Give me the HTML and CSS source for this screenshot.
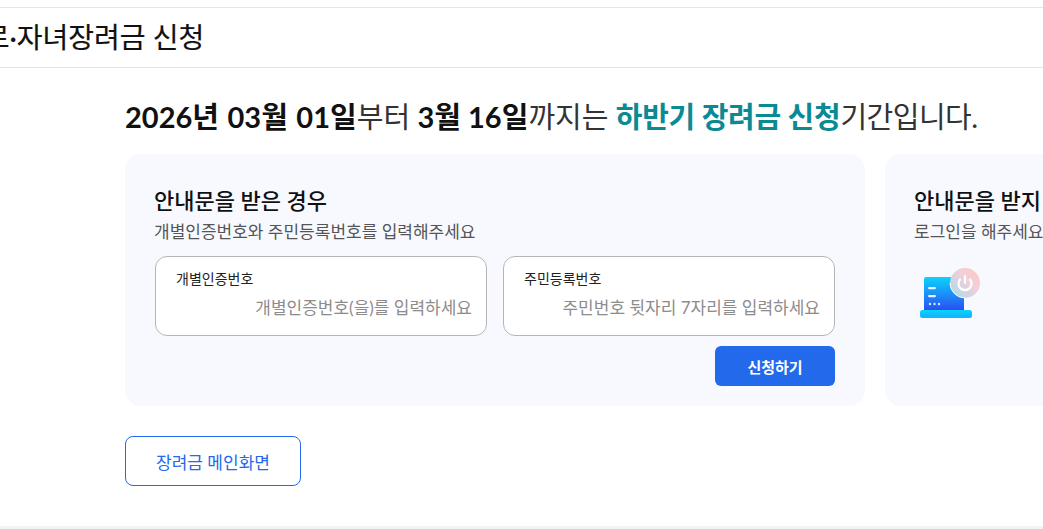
FILE: index.html
```html
<!DOCTYPE html>
<html lang="ko">
	<head>
		<title>근로·자녀장려금 신청</title>
		<meta name="viewport" content="width=device-width, initial-scale=1.0">
		<link rel="stylesheet" href="styles.css">
	</head>
	<body>
		<div class="page">
			<div class="titlebar">
				<h1>근로·자녀장려금 신청</h1>
			</div>
			<div class="content">
				<p class="notice"><b class="date">2026년 03월 01일</b>부터 <b>3월 16일</b>까지는 <b class="teal">하반기 장려금 신청</b><span class="tail">기간입니다.</span></p>
				<div class="cards">
					<div class="card">
						<h2>안내문을 받은 경우</h2>
						<p class="desc">개별인증번호와 주민등록번호를 입력해주세요</p>
						<div class="fields">
							<label class="field">
								<span class="field-name">개별인증번호</span>
								<input type="text" placeholder="개별인증번호(을)를 입력하세요">
							</label>
							<label class="field">
								<span class="field-name">주민등록번호</span>
								<input type="text" placeholder="주민번호 뒷자리 7자리를 입력하세요">
							</label>
						</div>
						<div class="actions">
							<button class="apply">신청하기</button>
						</div>
					</div>
					<div class="card card-side">
						<h2>안내문을 받지 않은 경우</h2>
						<p class="desc">로그인을 해주세요</p>
						<svg class="login-icon" width="62" height="52" viewBox="0 0 62 52">
							<defs>
								<linearGradient id="screen" x1="0" y1="0" x2="0" y2="1">
									<stop offset="0" stop-color="#0bd4fd"/>
									<stop offset="1" stop-color="#2a4ff2"/>
								</linearGradient>
								<linearGradient id="power" x1="0" y1="1" x2="1" y2="0">
									<stop offset="0" stop-color="#9fdcf2"/>
									<stop offset="0.600" stop-color="#f3d0d6"/>
									<stop offset="1" stop-color="#fcc6c6"/>
								</linearGradient>
								<linearGradient id="base" x1="0" y1="0" x2="0" y2="1">
									<stop offset="0" stop-color="#08d4fd"/>
									<stop offset="1" stop-color="#14b0fb"/>
								</linearGradient>
							</defs>
							<path d="M4 11a2 2 0 0 1 2-2h38v33H4z" fill="url(#screen)"/>
							<rect x="0" y="42" width="52" height="8" rx="2.500" fill="url(#base)"/>
							<rect x="8" y="19" width="8" height="2.200" rx="1.100" fill="#e4f6ff"/>
							<rect x="8" y="27" width="8" height="2.200" rx="1.100" fill="#e4f6ff"/>
							<circle cx="10" cy="36" r="1.200" fill="#cfeeff"/>
							<circle cx="14.500" cy="36" r="1.200" fill="#cfeeff"/>
							<circle cx="19" cy="36" r="1.200" fill="#cfeeff"/>
							<circle cx="45" cy="15" r="15" fill="url(#power)"/>
							<path d="M30 15a15 15 0 0 0 15 15" fill="none" stroke="#fff" stroke-width="1"/>
							<path d="M40 11.500a6.500 6.500 0 1 0 10 0" fill="none" stroke="#fff" stroke-width="2.200" stroke-linecap="round"/>
							<path d="M45 8v7" stroke="#fff" stroke-width="2.200" stroke-linecap="round"/>
						</svg>
					</div>
				</div>
				<a class="main-link" href="#">장려금 메인화면</a>
			</div>
		</div>
	</body>
</html>
```

FILE: styles.css
```css
html, body {
	height: 100%;
}
body {
	font-family: Lato, 'Noto Sans CJK KR', sans-serif;
	margin: 0px;
	background-color: #ffffff;
	color: #111111;
	overflow: hidden;
}
.page {
	height: 526px;
	border-bottom: 3px solid #f2f3f7;
	overflow: hidden;
}

.titlebar {
	margin-top: 7px;
	height: 59px;
	border-top: 1px solid #e5e5e5;
	border-bottom: 1px solid #e5e5e5;
	display: flex;
	align-items: center;
}
h1 {
	font-size: 28px;
	font-weight: 400;
	line-height: 59px;
	margin: 0px 0px 0px -42px;
	white-space: nowrap;
	-webkit-text-stroke: 0.2px #111111;
}

.content {
	padding-left: 125px;
}
.notice {
	font-size: 29px;
	line-height: 40px;
	margin: 29px 0px 17px;
	white-space: nowrap;
	color: #333333;
}
.notice b {
	color: #111111;
	font-weight: 700;
}
.notice .date {
	word-spacing: 1.500px;
}
.notice .teal {
	color: #0b8a93;
	letter-spacing: -0.300px;
}
.notice .tail {
	letter-spacing: -0.500px;
}

.cards {
	display: flex;
	gap: 20px;
	width: 1200px;
}
.card {
	width: 740px;
	height: 252px;
	box-sizing: border-box;
	flex-shrink: 0;
	background-color: #f8f9ff;
	border-radius: 16px;
	padding: 30px 30px 30px 29px;
}
.card-side {
	width: 400px;
}
h2 {
	font-size: 22px;
	font-weight: 500;
	line-height: 34px;
	margin: 0px;
	white-space: nowrap;
}
.desc {
	font-size: 17px;
	line-height: 24px;
	margin: 2px 0px 0px;
	color: #555555;
	white-space: nowrap;
}

.fields {
	display: flex;
	gap: 16px;
	margin-top: 12px;
	margin-left: 1px;
}
.field {
	width: 332px;
	height: 80px;
	box-sizing: border-box;
	background-color: #ffffff;
	border: 1px solid #b5b5b8;
	border-radius: 12px;
	padding: 12px 14px 0px 20px;
	display: flex;
	flex-direction: column;
}
.field-name {
	font-size: 14px;
	line-height: 20px;
	color: #222222;
}
.field input {
	font-family: inherit;
	font-size: 17px;
	line-height: 24px;
	border: 0px;
	padding: 0px;
	margin-top: 7px;
	background: none;
	text-align: right;
	outline: none;
}
.field input::placeholder {
	color: #8c8c8c;
	opacity: 1;
}

.actions {
	display: flex;
	justify-content: flex-end;
	margin-top: 10px;
}
.apply {
	width: 120px;
	height: 40px;
	font-family: inherit;
	font-size: 15px;
	font-weight: 700;
	color: #ffffff;
	background-color: #2369ec;
	border: 0px;
	border-radius: 6px;
}

.login-icon {
	display: block;
	margin-top: 24px;
	margin-left: 6px;
}

.main-link {
	display: flex;
	align-items: center;
	justify-content: center;
	box-sizing: border-box;
	width: 176px;
	height: 50px;
	margin-top: 30px;
	border: 1px solid #2369ec;
	border-radius: 8px;
	font-size: 17px;
	color: #2369ec;
	text-decoration: none;
	background-color: #ffffff;
}
```
